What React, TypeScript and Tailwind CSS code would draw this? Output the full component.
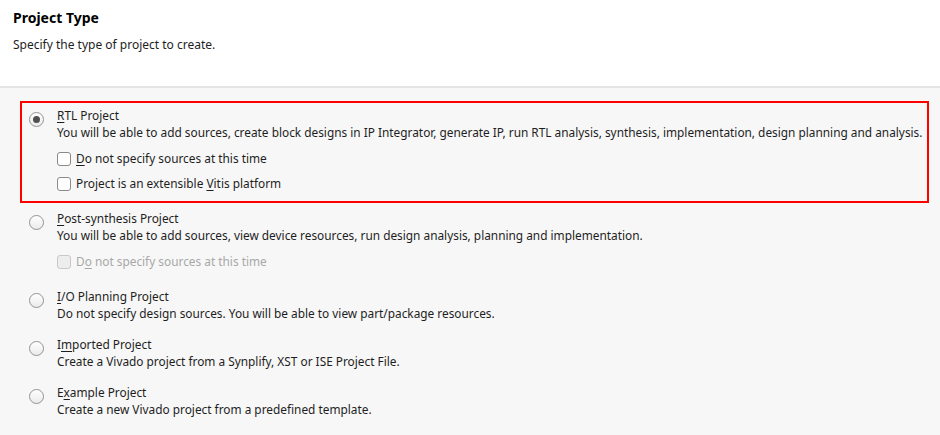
import React from 'react';

type SubOption = { label: React.ReactNode; disabled?: boolean };

type Option = {
  title: React.ReactNode;
  desc: string;
  selected?: boolean;
  subs?: SubOption[];
};

const mn = (before: string, key: string, after: string) => (
  <>
    {before}
    <span className="underline underline-offset-2">{key}</span>
    {after}
  </>
);

const options: Option[] = [
  {
    title: mn('', 'R', 'TL Project'),
    desc: 'You will be able to add sources, create block designs in IP Integrator, generate IP, run RTL analysis, synthesis, implementation, design planning and analysis.',
    selected: true,
    subs: [
      { label: mn('', 'D', 'o not specify sources at this time') },
      { label: mn('Project is an extensible ', 'V', 'itis platform') },
    ],
  },
  {
    title: mn('', 'P', 'ost-synthesis Project'),
    desc: 'You will be able to add sources, view device resources, run design analysis, planning and implementation.',
    subs: [{ label: mn('D', 'o', ' not specify sources at this time'), disabled: true }],
  },
  {
    title: mn('', 'I', '/O Planning Project'),
    desc: 'Do not specify design sources. You will be able to view part/package resources.',
  },
  {
    title: mn('I', 'm', 'ported Project'),
    desc: 'Create a Vivado project from a Synplify, XST or ISE Project File.',
  },
  {
    title: mn('E', 'x', 'ample Project'),
    desc: 'Create a new Vivado project from a predefined template.',
  },
];

function Radio({ checked }: { checked?: boolean }) {
  return (
    <span className="mt-[5px] flex h-[15px] w-[15px] shrink-0 items-center justify-center rounded-full border border-[#939393] bg-gradient-to-b from-[#ffffff] to-[#ebebeb]">
      {checked && <span className="h-[7px] w-[7px] rounded-full bg-[#505050]" />}
    </span>
  );
}

function Checkbox({ disabled }: { disabled?: boolean }) {
  return (
    <span
      className={
        disabled
          ? 'h-[14px] w-[14px] shrink-0 rounded-[3px] border border-[#c8c8c8] bg-[#ededed]'
          : 'h-[14px] w-[14px] shrink-0 rounded-[3px] border border-[#8a8a8a] bg-white'
      }
    />
  );
}

export default function App() {
  return (
    <div className="h-[435px] w-[940px] overflow-hidden bg-[#f7f7f7] font-['Noto_Sans',sans-serif] text-[11.85px] text-[#1e1e1e]">
      <div className="h-[88px] border-b-2 border-[#e4e4e4] bg-white px-[13px] pt-[7px]">
        <h1 className="text-[14px] leading-[22px] font-bold text-black">Project Type</h1>
        <p className="mt-[7px] text-[12px] leading-[17px]">Specify the type of project to create.</p>
      </div>

      <div className="flex flex-col gap-[1px] px-[20px] pt-[13px]">
        {options.map((opt, i) => (
          <div
            key={i}
            className={`flex w-[909px] gap-[13px] border-2 pt-[4px] pr-[4px] pb-[5px] pl-[7px] ${
              opt.selected ? 'border-[#ff0000]' : 'border-transparent'
            }`}
          >
            <Radio checked={opt.selected} />
            <div className="flex flex-col">
              <div className="leading-[17px]">{opt.title}</div>
              <div className="leading-[17px] whitespace-nowrap">{opt.desc}</div>
              {opt.subs && (
                <div className="mt-[5px] flex flex-col">
                  {opt.subs.map((s, j) => (
                    <label
                      key={j}
                      className={`flex h-[25px] items-center gap-[5px] ${s.disabled ? 'text-[#a8a8a8]' : ''}`}
                    >
                      <Checkbox disabled={s.disabled} />
                      <span>{s.label}</span>
                    </label>
                  ))}
                </div>
              )}
            </div>
          </div>
        ))}
      </div>
    </div>
  );
}
